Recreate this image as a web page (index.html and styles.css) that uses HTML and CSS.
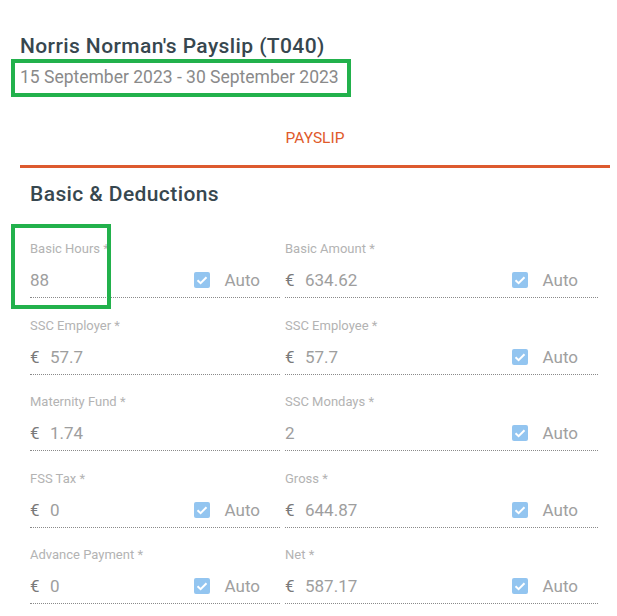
FILE: index.html
```html
<!DOCTYPE html>
<html lang="en">
<head>
  <meta charset="UTF-8" />
  <meta name="viewport" content="width=device-width, initial-scale=1.0"/>
  <title>Payslip</title>
  <link rel="stylesheet" href="styles.css">
</head>
<body>
<div class="page">
  <h1 class="title">Norris Norman's Payslip (T040)</h1>
  <div class="period"><span class="mark">15 September 2023 - 30 September 2023</span></div>

  <div class="tabs">
    <div class="tab active">Payslip</div>
  </div>

  <section class="card">
    <h2 class="card-title">Basic &amp; Deductions</h2>

    <div class="fields">
      <div class="field">
        <span class="mark-box"></span>
        <label class="field-label">Basic Hours *</label>
        <div class="field-row">
          <span class="value">88</span>
          <span class="auto"><span class="check"><svg viewBox="0 0 16 16"><polyline points="3.5,8.3 6.6,11.2 12.5,5.2"/></svg></span>Auto</span>
        </div>
      </div>
      <div class="field">
        <label class="field-label">Basic Amount *</label>
        <div class="field-row">
          <span class="cur">€</span><span class="value">634.62</span>
          <span class="auto"><span class="check"><svg viewBox="0 0 16 16"><polyline points="3.5,8.3 6.6,11.2 12.5,5.2"/></svg></span>Auto</span>
        </div>
      </div>

      <div class="field">
        <label class="field-label">SSC Employer *</label>
        <div class="field-row">
          <span class="cur">€</span><span class="value">57.7</span>
        </div>
      </div>
      <div class="field">
        <label class="field-label">SSC Employee *</label>
        <div class="field-row">
          <span class="cur">€</span><span class="value">57.7</span>
          <span class="auto"><span class="check"><svg viewBox="0 0 16 16"><polyline points="3.5,8.3 6.6,11.2 12.5,5.2"/></svg></span>Auto</span>
        </div>
      </div>

      <div class="field">
        <label class="field-label">Maternity Fund *</label>
        <div class="field-row">
          <span class="cur">€</span><span class="value">1.74</span>
        </div>
      </div>
      <div class="field">
        <label class="field-label">SSC Mondays *</label>
        <div class="field-row">
          <span class="value">2</span>
          <span class="auto"><span class="check"><svg viewBox="0 0 16 16"><polyline points="3.5,8.3 6.6,11.2 12.5,5.2"/></svg></span>Auto</span>
        </div>
      </div>

      <div class="field">
        <label class="field-label">FSS Tax *</label>
        <div class="field-row">
          <span class="cur">€</span><span class="value">0</span>
          <span class="auto"><span class="check"><svg viewBox="0 0 16 16"><polyline points="3.5,8.3 6.6,11.2 12.5,5.2"/></svg></span>Auto</span>
        </div>
      </div>
      <div class="field">
        <label class="field-label">Gross *</label>
        <div class="field-row">
          <span class="cur">€</span><span class="value">644.87</span>
          <span class="auto"><span class="check"><svg viewBox="0 0 16 16"><polyline points="3.5,8.3 6.6,11.2 12.5,5.2"/></svg></span>Auto</span>
        </div>
      </div>

      <div class="field">
        <label class="field-label">Advance Payment *</label>
        <div class="field-row">
          <span class="cur">€</span><span class="value">0</span>
          <span class="auto"><span class="check"><svg viewBox="0 0 16 16"><polyline points="3.5,8.3 6.6,11.2 12.5,5.2"/></svg></span>Auto</span>
        </div>
      </div>
      <div class="field">
        <label class="field-label">Net *</label>
        <div class="field-row">
          <span class="cur">€</span><span class="value">587.17</span>
          <span class="auto"><span class="check"><svg viewBox="0 0 16 16"><polyline points="3.5,8.3 6.6,11.2 12.5,5.2"/></svg></span>Auto</span>
        </div>
      </div>
    </div>
  </section>
</div>
</body>
</html>
```

FILE: styles.css
```css
body {
  margin: 0;
  font-family: Roboto, "Liberation Sans", Arial, sans-serif;
  background: #fff;
  overflow: hidden;
}
.page {
  padding: 0 7px 0 20px;
}
.title {
  margin: 34px 0 0;
  font-size: 21px;
  line-height: 24px;
  font-weight: 500;
  letter-spacing: 0.4px;
  color: #37474f;
}
.period {
  margin-top: 1px;
}
.mark {
  display: inline-block;
  margin-left: -9px;
  padding: 3px 8px 5px 5px;
  border: 4px solid #22b14c;
  font-size: 17.5px;
  line-height: 22px;
  color: #8a8a8a;
}
.tabs {
  margin-top: 14px;
  display: flex;
}
.tab {
  flex: 1;
  height: 54px;
  display: flex;
  align-items: center;
  justify-content: center;
  font-size: 15.5px;
  text-transform: uppercase;
  color: #e05a2b;
}
.tab.active {
  border-bottom: 3px solid #dd5a2e;
}
.card {
  padding-left: 10px;
}
.card-title {
  margin: 14px 0 0;
  font-size: 21px;
  line-height: 24px;
  font-weight: 500;
  letter-spacing: 0.4px;
  color: #37474f;
}
.fields {
  margin-top: 35px;
  display: grid;
  grid-template-columns: 250px 313px;
  column-gap: 5px;
  row-gap: 19.5px;
}
.field {
  position: relative;
}
.field-label {
  display: block;
  font-size: 13px;
  line-height: 16px;
  color: #b3b3b3;
}
.field-row {
  margin-top: 6px;
  height: 34px;
  display: flex;
  align-items: center;
  border-bottom: 1px dotted #8a8a8a;
  font-size: 17px;
  line-height: 22px;
  color: #9e9e9e;
}
.cur {
  width: 20px;
  color: #7a7a7a;
}
.auto {
  margin-left: auto;
  margin-right: 20px;
  display: flex;
  align-items: center;
  color: #a0a0a0;
}
.check {
  width: 16px;
  height: 16px;
  margin-right: 14.5px;
  border-radius: 2px;
  background: #93c5f0;
  display: block;
}
.check svg {
  display: block;
  width: 16px;
  height: 16px;
  fill: none;
  stroke: #fff;
  stroke-width: 2;
}
.mark-box {
  position: absolute;
  left: -19px;
  top: -17px;
  width: 100px;
  height: 85px;
  box-sizing: border-box;
  border: 4.5px solid #22b14c;
}
```
